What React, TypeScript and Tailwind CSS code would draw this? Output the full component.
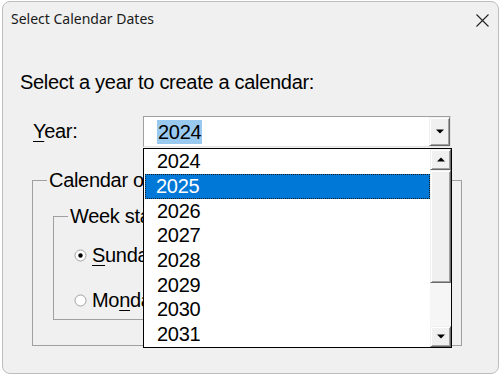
import React from "react";

const years = ["2024", "2025", "2026", "2027", "2028", "2029", "2030", "2031"];

const Arrow = ({ up = false }: { up?: boolean }) => (
  <svg width="8" height="5" viewBox="0 0 8 5" className="block">
    <path d={up ? "M0 4.5 L4 0.5 L8 4.5 Z" : "M0 0.5 L8 0.5 L4 4.5 Z"} fill="#000" />
  </svg>
);

// classic raised 3d button look
const raised =
  "bg-[#f0f0f0] border-t border-l border-t-[#f0f0f0] border-l-[#f0f0f0] border-b border-r border-b-[#696969] border-r-[#696969] shadow-[inset_1px_1px_0_#ffffff,inset_-1px_-1px_0_#a0a0a0]";

const Radio = ({ checked }: { checked?: boolean }) => (
  <svg width="13" height="13" viewBox="0 0 13 13" className="block shrink-0">
    <circle cx="6.5" cy="6.5" r="5.5" fill="#fff" stroke="#a0a0a0" strokeWidth="1" />
    {checked && <circle cx="6.5" cy="6.5" r="2.2" fill="#000" />}
  </svg>
);

export default function App() {
  return (
    <div className="relative w-[503px] h-[375px] overflow-hidden bg-white font-['Liberation_Sans',Arial,sans-serif] text-black">
      <div className="ml-[2px] mt-[1px] w-[497px] h-[373px] rounded-[8px] border border-[#bdbdbd] bg-[#f0f0f0] flex flex-col">
        {/* title bar */}
        <div className="h-[44px] flex items-start justify-between pl-[8px] pr-[9px] pt-[7px]">
          <span className="font-['Noto_Sans',sans-serif] text-[14px] leading-5 text-[#1a1a1a]">
            Select Calendar Dates
          </span>
          <svg width="13" height="13" viewBox="0 0 13 13" className="mt-[5px]">
            <path d="M0.5 0.5 L12.5 12.5 M12.5 0.5 L0.5 12.5" stroke="#222" strokeWidth="1.1" />
          </svg>
        </div>

        <div className="pl-[17px] text-[20px] leading-[23px] tracking-[-0.3px]">
          <p className="mt-[25px]">Select a year to create a calendar:</p>

          <div className="mt-[22px] flex items-center">
            <span className="ml-[13px] w-[110px]">
              <span className="underline underline-offset-[3px] decoration-1">Y</span>ear:
            </span>
            <div className="w-[308px] h-[31px] flex bg-white border-t border-l border-t-[#a0a0a0] border-l-[#a0a0a0] border-b border-r border-b-[#e3e3e3] border-r-[#e3e3e3]">
              <div className="flex-1 flex items-center pl-[13px]">
                <span className="bg-[#99c9ef] leading-[24px] px-px">2024</span>
              </div>
              <div className={`w-[21px] h-[29px] flex items-center justify-center ${raised}`}>
                <Arrow />
              </div>
            </div>
          </div>

          <fieldset className="mt-[22px] ml-[12px] w-[430px] h-[177px] border border-[#a0a0a0]">
            <legend className="ml-[14px] px-[2px]">Calendar options</legend>
            <fieldset className="mt-[13px] ml-[20px] w-[300px] h-[115px] border border-[#a0a0a0]">
              <legend className="ml-[14px] px-[2px]">Week starts on</legend>
              <div className="mt-[16px] ml-[20px] flex items-center gap-[5px]">
                <Radio checked />
                <span>
                  <span className="underline underline-offset-[3px] decoration-1">S</span>unday
                </span>
              </div>
              <div className="mt-[22px] ml-[20px] flex items-center gap-[5px]">
                <Radio />
                <span>
                  Mo<span className="underline underline-offset-[3px] decoration-1">n</span>day
                </span>
              </div>
            </fieldset>
          </fieldset>
        </div>
      </div>

      {/* open dropdown list */}
      <div className="absolute left-[143px] top-[148px] w-[309px] h-[200px] border border-black bg-white flex text-[20px] tracking-[-0.3px]">
        <ul className="w-[286px] pl-px pt-[0.3px]">
          {years.map((y) => (
            <li
              key={y}
              className={
                y === "2025"
                  ? "h-[24.67px] leading-[24.67px] pl-[11px] bg-[#0078d7] text-white outline outline-1 outline-dotted outline-[#1a1a1a] -outline-offset-1"
                  : "h-[24.67px] leading-[24.67px] pl-[12px]"
              }
            >
              {y}
            </li>
          ))}
        </ul>
        <div className="w-[21px] flex flex-col">
          <div className={`h-[21px] flex items-center justify-center ${raised}`}>
            <Arrow up />
          </div>
          <div className={`h-[113px] ${raised}`} />
          <div className="flex-1 bg-[#f6f6f6]" />
          <div className={`h-[21px] flex items-center justify-center ${raised}`}>
            <Arrow />
          </div>
        </div>
      </div>
    </div>
  );
}
